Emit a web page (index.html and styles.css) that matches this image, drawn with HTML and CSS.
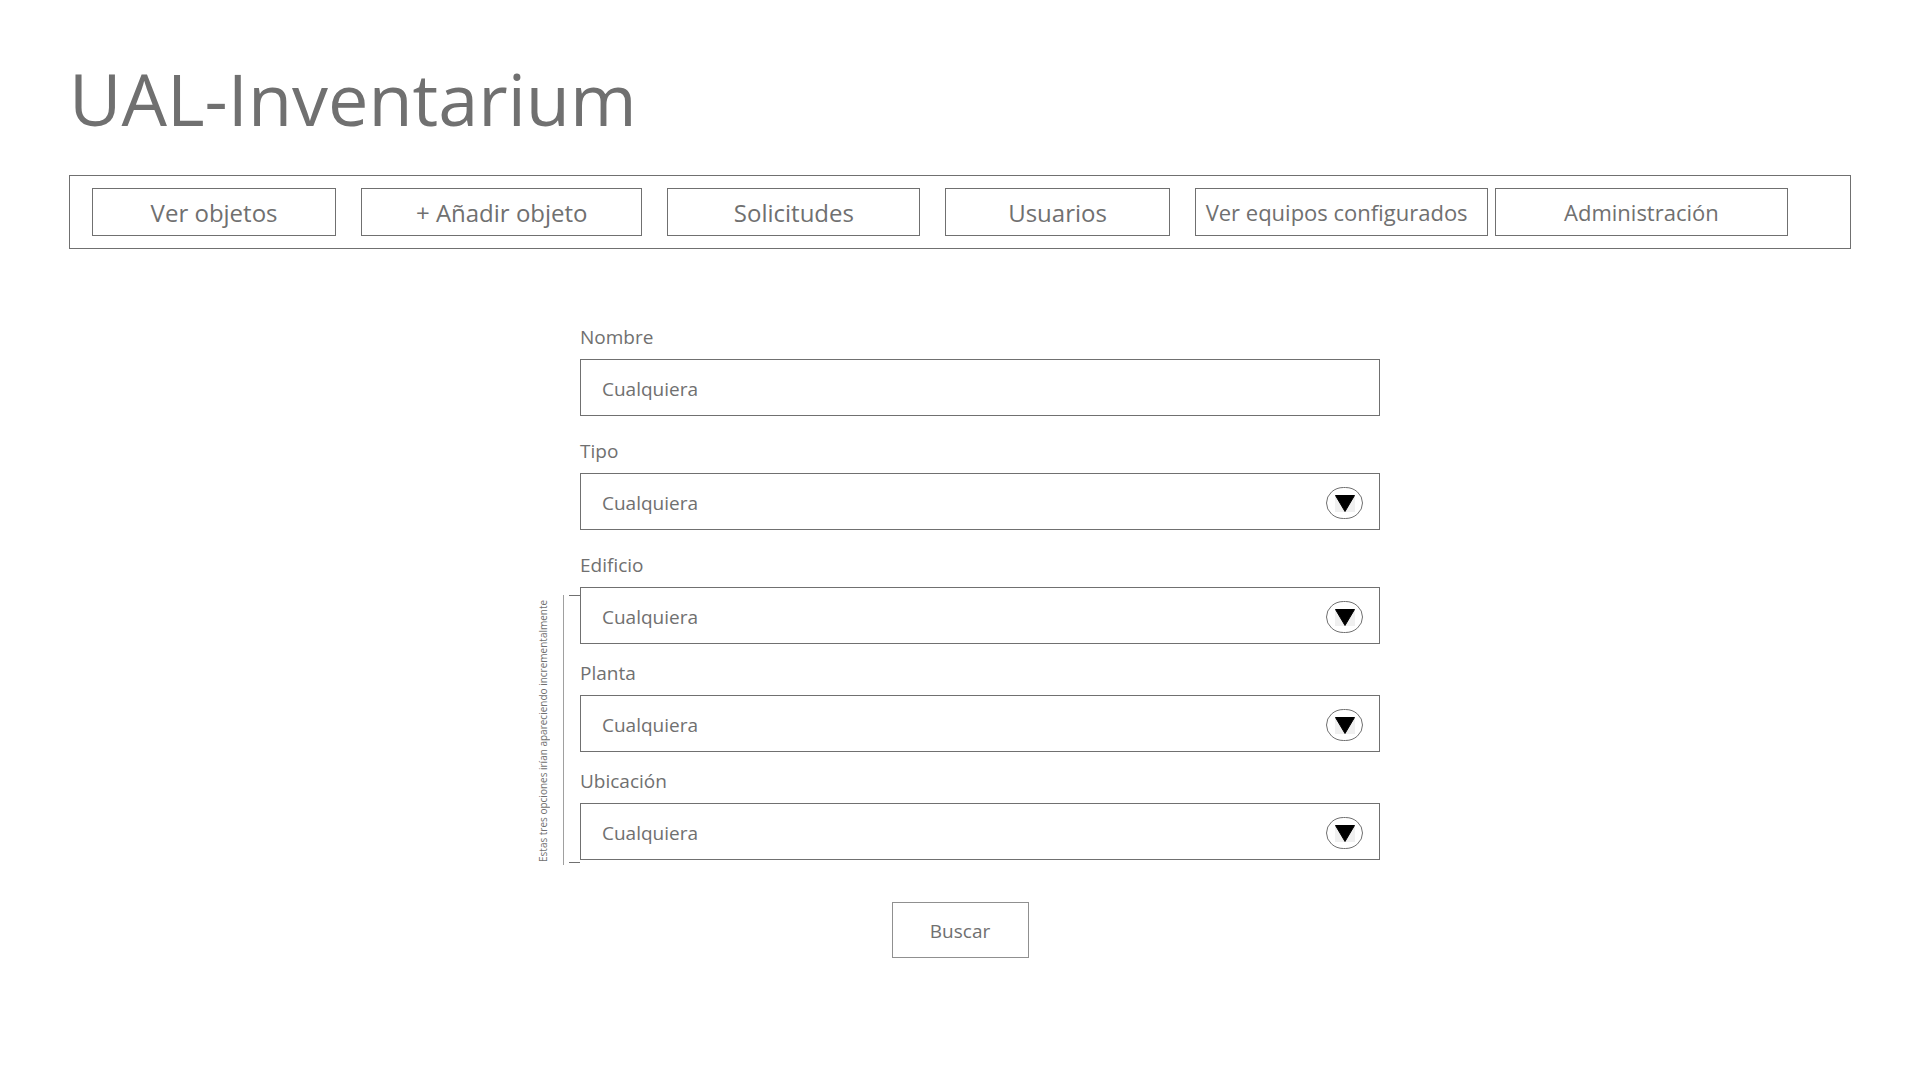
FILE: index.html
```html
<!DOCTYPE html>
<html lang="es">
<head>
<meta charset="utf-8">
<meta name="viewport" content="width=device-width, initial-scale=1">
<title>UAL-Inventarium</title>
<link rel="stylesheet" href="styles.css">
</head>
<body>
<svg class="sprite" aria-hidden="true">
  <symbol id="arrow" viewBox="0 0 38 33">
    <rect x="0.5" y="0.5" width="36" height="31" rx="17" ry="15.5" fill="#fff" stroke="#707070"/>
    <rect x="9" y="8" width="20" height="17" fill="#f0f0f0"/>
    <path d="M9.5 8.5H28.5L19 24.5Z" fill="#000" stroke="#000" stroke-linejoin="round"/>
  </symbol>
</svg>
<header class="header">
  <h1 class="title">UAL-Inventarium</h1>
  <nav class="nav">
    <a class="nav-link" href="#">Ver objetos</a>
    <a class="nav-link" href="#">+ Añadir objeto</a>
    <a class="nav-link" href="#">Solicitudes</a>
    <a class="nav-link" href="#">Usuarios</a>
    <div class="nav-pair">
      <a class="nav-link nav-link-small nav-link-start" href="#">Ver equipos configurados</a>
      <a class="nav-link nav-link-small" href="#">Administración</a>
    </div>
  </nav>
</header>
<main>
  <form class="search">
    <div class="fields">
      <div class="field">
        <label class="label" for="nombre">Nombre</label>
        <input class="control" id="nombre" type="text" placeholder="Cualquiera">
      </div>
      <div class="field">
        <label class="label" for="tipo">Tipo</label>
        <div class="select">
          <select class="control" id="tipo"><option>Cualquiera</option></select>
          <svg class="arrow" aria-hidden="true"><use href="#arrow"/></svg>
        </div>
      </div>
    </div>
    <div class="place">
      <div class="note">
        <p class="note-text">Estas tres opciones irían apareciendo incrementalmente</p>
        <div class="note-line"></div>
        <div class="note-ticks"></div>
      </div>
      <div class="place-fields">
        <div class="field">
          <label class="label" for="edificio">Edificio</label>
          <div class="select">
            <select class="control" id="edificio"><option>Cualquiera</option></select>
            <svg class="arrow" aria-hidden="true"><use href="#arrow"/></svg>
          </div>
        </div>
        <div class="field">
          <label class="label" for="planta">Planta</label>
          <div class="select">
            <select class="control" id="planta"><option>Cualquiera</option></select>
            <svg class="arrow" aria-hidden="true"><use href="#arrow"/></svg>
          </div>
        </div>
        <div class="field">
          <label class="label" for="ubicacion">Ubicación</label>
          <div class="select">
            <select class="control" id="ubicacion"><option>Cualquiera</option></select>
            <svg class="arrow" aria-hidden="true"><use href="#arrow"/></svg>
          </div>
        </div>
      </div>
    </div>
    <button class="submit" type="submit">Buscar</button>
  </form>
</main>
</body>
</html>
```
FILE: styles.css
```css
* {
  box-sizing: border-box;
}

body {
  margin: 0;
  background: #fff;
  color: #707070;
  font-family: "Segoe UI", "Open Sans", "Noto Sans", sans-serif;
  font-size: 19px;
}

.sprite {
  display: none;
}

.header {
  padding: 48px 69px 0;
}

.title {
  margin: 0;
  font-size: 72px;
  font-weight: 400;
  line-height: 100px;
}

.nav {
  display: grid;
  grid-template-columns: 244fr 281fr 253fr 224fr 593fr;
  gap: 25px;
  margin-top: 27px;
  padding: 12px 62px 12px 22px;
  border: 1px solid #707070;
}

.nav-pair {
  display: grid;
  grid-template-columns: 1fr 1fr;
  gap: 7px;
}

.nav-link {
  display: flex;
  align-items: center;
  justify-content: center;
  height: 48px;
  border: 1px solid #707070;
  color: inherit;
  font-size: 24px;
  text-decoration: none;
  white-space: nowrap;
}

.nav-link-small {
  font-size: 22px;
}

.nav-link-start {
  justify-content: flex-start;
  padding-left: 10px;
}

.search {
  width: 100%;
  max-width: 840px;
  margin: 0 auto;
  padding: 74px 0 48px;
}

.fields {
  display: grid;
  gap: 21px;
  margin-bottom: 21px;
  padding-left: 40px;
}

.place {
  display: flex;
  align-items: flex-start;
}

.place-fields {
  display: grid;
  flex: 1;
  gap: 15px;
}

.field {
  display: grid;
  gap: 8px;
}

.label {
  line-height: 28px;
}

.control {
  display: block;
  width: 100%;
  height: 57px;
  margin: 0;
  padding: 2px 21px 0;
  border: 1px solid #707070;
  border-radius: 0;
  background: #fff;
  color: inherit;
  font: inherit;
  appearance: none;
}

.control::placeholder {
  color: inherit;
  opacity: 1;
}

.select {
  position: relative;
}

.arrow {
  position: absolute;
  top: 14px;
  right: 16px;
  width: 38px;
  height: 33px;
  pointer-events: none;
}

.note {
  display: flex;
  width: 40px;
  padding-top: 44px;
}

.note-text {
  width: 14px;
  height: 272px;
  margin: 0 13px 0 -4px;
  font-size: 10px;
  line-height: 14px;
  text-align: center;
  white-space: nowrap;
  writing-mode: vertical-rl;
  transform: rotate(180deg);
}

.note-line {
  height: 270px;
  border-left: 1px solid #a0a0a0;
}

.note-ticks {
  flex: 1;
  height: 268px;
  margin-left: 5px;
  border: solid #707070;
  border-width: 1px 0;
}

.submit {
  display: block;
  width: 137px;
  height: 56px;
  margin: 35px auto 0;
  padding: 2px 0 0;
  border: 1px solid #909090;
  background: #fff;
  color: inherit;
  font: inherit;
}
```
